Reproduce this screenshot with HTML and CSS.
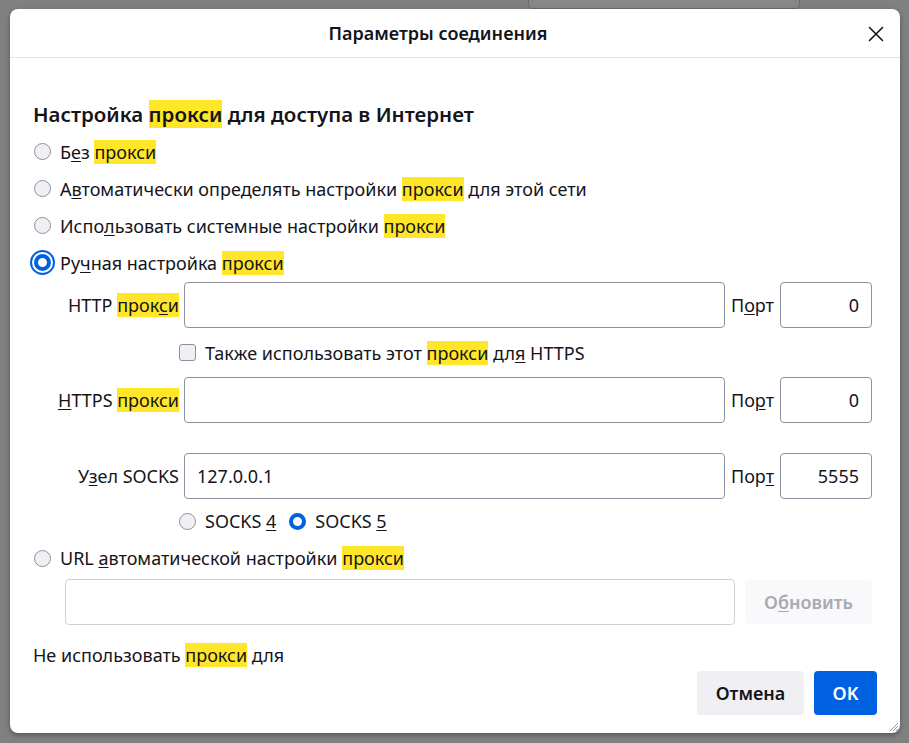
FILE: index.html
```html
<!DOCTYPE html>
<html lang="ru">
<head>
<meta charset="utf-8">
<title>Параметры соединения</title>
<link rel="stylesheet" href="styles.css">
</head>
<body>
<div class="behind"></div>
<div class="dialog">
  <div class="header">
    <div class="title">Параметры соединения</div>
    <span class="close" aria-label="Закрыть">
      <svg width="16" height="16" viewBox="0 0 16 16"><path d="M1.5 1.5L14.5 14.5M14.5 1.5L1.5 14.5" stroke="#15141a" stroke-width="1.6" stroke-linecap="round" fill="none"/></svg>
    </span>
  </div>
  <div class="content">
    <h2 class="heading">Настройка <mark>прокси</mark> для доступа в Интернет</h2>

    <div class="radio-row"><span class="radio"></span><span>Б<u>е</u>з <mark>прокси</mark></span></div>
    <div class="radio-row"><span class="radio"></span><span>А<u>в</u>томатически определять настройки <mark>прокси</mark> для этой сети</span></div>
    <div class="radio-row"><span class="radio"></span><span>Испо<u>л</u>ьзовать системные настройки <mark>прокси</mark></span></div>
    <div class="radio-row"><span class="radio checked focused"></span><span>Ру<u>ч</u>ная настройка <mark>прокси</mark></span></div>

    <div class="proxy-row first">
      <span class="label">HTTP <mark>прок<u>с</u>и</mark></span>
      <span class="input"></span>
      <span class="port-label">П<u>о</u>рт</span>
      <span class="input port">0</span>
    </div>
    <div class="check-row">
      <span class="checkbox"></span>
      <span>Также использовать этот <mark>прокси</mark> дл<u>я</u> HTTPS</span>
    </div>
    <div class="proxy-row">
      <span class="label"><u>H</u>TTPS <mark>прокси</mark></span>
      <span class="input"></span>
      <span class="port-label">По<u>р</u>т</span>
      <span class="input port">0</span>
    </div>
    <div class="proxy-row socks">
      <span class="label">У<u>з</u>ел SOCKS</span>
      <span class="input">127.0.0.1</span>
      <span class="port-label">Пор<u>т</u></span>
      <span class="input port">5555</span>
    </div>
    <div class="socks-row">
      <span class="radio"></span><span class="socks-text">SOCKS <u>4</u></span>
      <span class="radio checked"></span><span>SOCKS <u>5</u></span>
    </div>
    <div class="radio-row url"><span class="radio"></span><span>URL <u>а</u>втоматической настройки <mark>прокси</mark></span></div>
    <div class="url-row">
      <span class="input disabled"></span>
      <span class="btn disabled-btn">О<u>б</u>новить</span>
    </div>
    <div class="noproxy">Не использовать <mark>прокси</mark> <u>д</u>ля</div>
    <div class="footer">
      <span class="btn cancel">Отмена</span>
      <span class="btn primary">OK</span>
    </div>
  </div>
  <svg class="grip" width="12" height="12" viewBox="0 0 12 12"><path d="M11 3L3 11M11 6L6 11M11 9L9 11" stroke="#9a9aa2" stroke-width="1" fill="none"/></svg>
</div>
</body>
</html>
```
FILE: styles.css
```css
html, body {
  margin: 0;
  padding: 0;
}
body {
  background: #808080;
  width: 909px;
  height: 743px;
  overflow: hidden;
  position: relative;
  font-family: "Noto Sans", "Open Sans", sans-serif;
  color: #15141a;
}
.behind {
  position: absolute;
  left: 528px;
  top: -6px;
  width: 270px;
  height: 13px;
  background: #878787;
  border: 1px solid #6c6c6c;
  border-radius: 4px;
}
.dialog {
  position: relative;
  margin: 9px 0 0 10px;
  width: 890px;
  height: 724px;
  background: #fff;
  border-radius: 8px;
  box-shadow: 0 2px 5px rgba(0, 0, 0, 0.35);
  display: flex;
  flex-direction: column;
}
.header {
  height: 48px;
  border-bottom: 1px solid #e0e0e6;
  display: flex;
  align-items: center;
  justify-content: center;
  padding-right: 34px;
  position: relative;
}
.title {
  font-size: 18px;
  font-weight: 600;
}
.close {
  position: absolute;
  right: 16px;
  top: 17px;
  width: 16px;
  height: 16px;
  display: flex;
}
.content {
  padding: 0 28px 18px 23px;
  display: flex;
  flex-direction: column;
  font-size: 18px;
}
mark {
  background: #ffe629;
  color: inherit;
}
u {
  text-decoration-thickness: 1px;
  text-underline-offset: 2px;
}
.heading {
  margin: 41px 0 4px 0;
  height: 30px;
  line-height: 30px;
  font-size: 20.5px;
  font-weight: 600;
}
.radio-row {
  height: 37px;
  display: flex;
  align-items: center;
  gap: 9px;
}
.radio {
  box-sizing: border-box;
  width: 17px;
  height: 17px;
  border-radius: 50%;
  border: 1px solid #8f8f9d;
  background: #f0f0f4;
  flex: none;
  margin-left: 1px;
}
.radio.checked {
  border: 4px solid #0061e0;
  background: #fff;
}
.radio.focused {
  outline: 2px solid #0061e0;
  outline-offset: 2px;
}
.proxy-row {
  height: 46px;
  display: flex;
  align-items: center;
}
.proxy-row.first {
  margin-top: 1px;
}
.proxy-row.socks {
  margin-top: 30px;
}
.label {
  width: 146px;
  text-align: right;
  flex: none;
  white-space: nowrap;
}
.input {
  box-sizing: border-box;
  height: 46px;
  flex: 1;
  margin-left: 5px;
  border: 1px solid #8f8f9d;
  border-radius: 4px;
  background: #fff;
  display: flex;
  align-items: center;
  padding: 0 12px;
}
.port-label {
  margin: 0 6px;
  flex: none;
}
.input.port {
  flex: none;
  width: 92px;
  margin-left: 0;
  justify-content: flex-end;
}
.check-row {
  height: 49px;
  display: flex;
  align-items: center;
  padding-left: 146px;
  gap: 9px;
}
.checkbox {
  box-sizing: border-box;
  width: 17px;
  height: 17px;
  border: 1px solid #8f8f9d;
  border-radius: 3px;
  background: #f0f0f4;
  flex: none;
}
.socks-row {
  height: 44px;
  display: flex;
  align-items: center;
  padding-left: 145px;
  gap: 9px;
}
.socks-text {
  margin-right: 3px;
}
.radio-row.url {
  height: 30px;
}
.url-row {
  margin-top: 6px;
  height: 46px;
  display: flex;
  padding-left: 32px;
  gap: 10px;
}
.input.disabled {
  margin-left: 0;
  border-color: #cfcfd8;
}
.btn {
  box-sizing: border-box;
  height: 44px;
  display: flex;
  align-items: center;
  justify-content: center;
  border-radius: 4px;
  font-weight: 600;
  flex: none;
}
.disabled-btn {
  width: 127px;
  background: #f9f9fb;
  color: #a9a9b1;
  align-self: center;
}
.noproxy {
  margin-top: 20px;
  height: 20px;
  line-height: 20px;
}
.footer {
  margin-top: 6px;
  margin-right: -5px;
  display: flex;
  justify-content: flex-end;
  gap: 10px;
}
.cancel {
  width: 107px;
  background: #f0f0f4;
}
.primary {
  width: 63px;
  background: #0061e0;
  color: #fff;
}
.grip {
  position: absolute;
  right: 1px;
  bottom: 1px;
}
```
